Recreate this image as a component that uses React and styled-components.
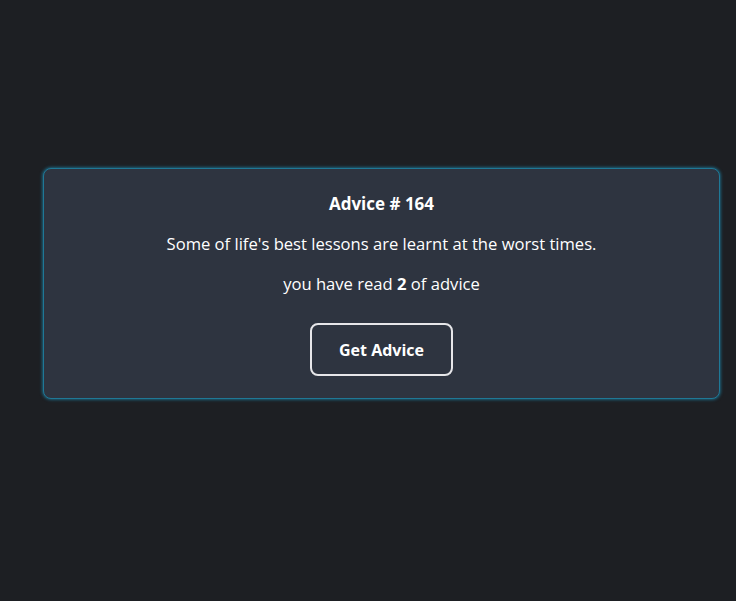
import React from "react";
import styled, { createGlobalStyle } from "styled-components";

const Global = createGlobalStyle`
  html, body { margin: 0; padding: 0; background: #1d1f23; }
  body { font-family: "Open Sans", "Noto Sans", sans-serif; color: #fff; }
  #root { min-height: 601px; }
`;

const Page = styled.div`
  min-height: 601px;
  box-sizing: border-box;
  padding: 168px 16px 0 43px;
  background: #1d1f23;
`;

const Card = styled.div`
  box-sizing: border-box;
  height: 231px;
  background: #2e3440;
  border: 1px solid #1f7896;
  border-radius: 8px;
  box-shadow: 0 0 3px 1px rgba(30, 125, 160, 0.7);
  display: flex;
  flex-direction: column;
  align-items: center;
  padding: 23px 24px 21px;
`;

const Title = styled.h2`
  margin: 0;
  font-size: 17px;
  line-height: 24px;
  font-weight: 700;
`;

const Text = styled.p`
  margin: 16px 0 0;
  font-size: 16.6px;
  line-height: 24px;
  font-weight: 400;
  & b { font-weight: 700; }
`;

const Button = styled.button`
  margin-top: 27px;
  width: 143px;
  height: 53px;
  background: transparent;
  color: #fff;
  border: 2px solid #e6e6e9;
  border-radius: 8px;
  font-family: inherit;
  font-size: 16px;
  font-weight: 700;
  cursor: pointer;
`;

export default function App() {
  return (
    <Page>
      <Global />
      <Card>
        <Title>Advice # 164</Title>
        <Text>Some of life's best lessons are learnt at the worst times.</Text>
        <Text>
          you have read <b>2</b> of advice
        </Text>
        <Button>Get Advice</Button>
      </Card>
    </Page>
  );
}
